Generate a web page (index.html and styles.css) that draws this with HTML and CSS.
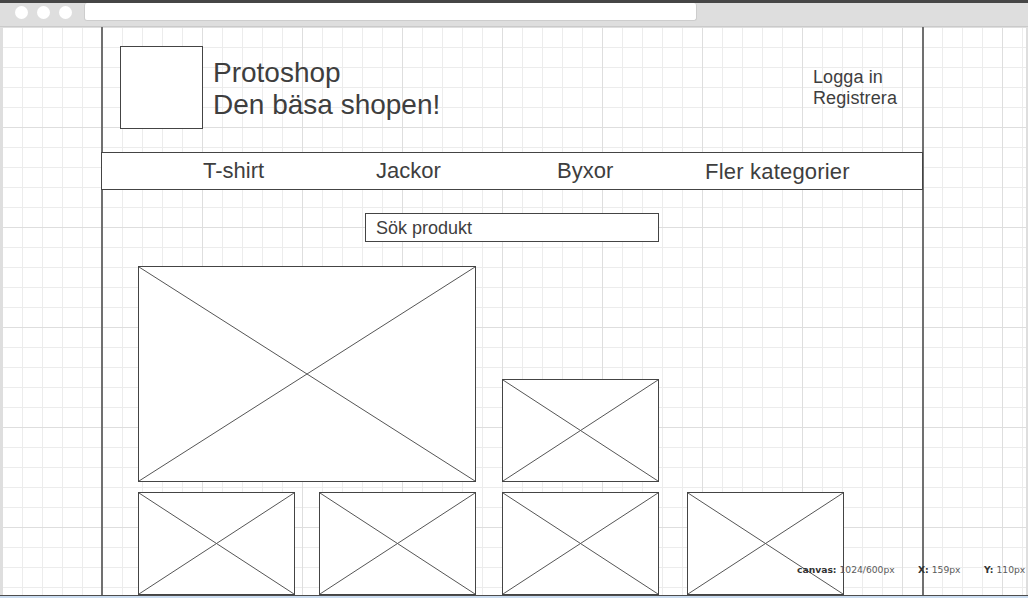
FILE: index.html
```html
<!DOCTYPE html>
<html lang="sv">
<head>
<meta charset="utf-8">
<title>Protoshop</title>
<link rel="stylesheet" href="styles.css">
</head>
<body>
<div class="window">
  <div class="chrome">
    <div class="dots">
      <span class="dot"></span>
      <span class="dot"></span>
      <span class="dot"></span>
    </div>
    <div class="address"></div>
  </div>
  <div class="canvas">
    <div class="page">
      <header class="header">
        <div class="logo"></div>
        <div class="brand">Protoshop<br>Den bäsa shopen!</div>
        <div class="account">Logga in<br>Registrera</div>
      </header>
      <nav class="nav">
        <span class="nav-item w1">T-shirt</span>
        <span class="nav-item w2">Jackor</span>
        <span class="nav-item w3">Byxor</span>
        <span class="nav-item">Fler kategorier</span>
      </nav>
      <div class="search">Sök produkt</div>
      <div class="row row-top">
        <div class="ph big"><svg viewBox="0 0 100 100" preserveAspectRatio="none"><line x1="0" y1="0" x2="100" y2="100"/><line x1="0" y1="100" x2="100" y2="0"/></svg></div>
        <div class="ph small gap26"><svg viewBox="0 0 100 100" preserveAspectRatio="none"><line x1="0" y1="0" x2="100" y2="100"/><line x1="0" y1="100" x2="100" y2="0"/></svg></div>
      </div>
      <div class="row row-bottom">
        <div class="ph small"><svg viewBox="0 0 100 100" preserveAspectRatio="none"><line x1="0" y1="0" x2="100" y2="100"/><line x1="0" y1="100" x2="100" y2="0"/></svg></div>
        <div class="ph small gap24"><svg viewBox="0 0 100 100" preserveAspectRatio="none"><line x1="0" y1="0" x2="100" y2="100"/><line x1="0" y1="100" x2="100" y2="0"/></svg></div>
        <div class="ph small gap26"><svg viewBox="0 0 100 100" preserveAspectRatio="none"><line x1="0" y1="0" x2="100" y2="100"/><line x1="0" y1="100" x2="100" y2="0"/></svg></div>
        <div class="ph small gap28"><svg viewBox="0 0 100 100" preserveAspectRatio="none"><line x1="0" y1="0" x2="100" y2="100"/><line x1="0" y1="100" x2="100" y2="0"/></svg></div>
      </div>
    </div>
    <div class="status">
      <span class="stat s1"><b>canvas:</b> 1024/600px</span>
      <span class="stat s2"><b>X:</b> 159px</span>
      <span class="stat"><b>Y:</b> 110px</span>
    </div>
  </div>
  <div class="bottom-line"></div>
  <div class="hscroll"></div>
</div>
</body>
</html>
```

FILE: styles.css
```css
html, body {
  margin: 0;
  padding: 0;
  width: 1028px;
  height: 598px;
  overflow: hidden;
  background: #dedede;
}

.window {
  display: flex;
  flex-direction: column;
  width: 1028px;
  height: 598px;
  font-family: "Liberation Sans", Arial, sans-serif;
  color: #3e3e3e;
}

.chrome {
  height: 23px;
  border-top: 3px solid #464646;
  border-bottom: 1px solid #cacaca;
  background: #dedede;
  display: flex;
  align-items: flex-start;
  flex: none;
}

.dots {
  display: flex;
  gap: 9px;
  margin-left: 15px;
  margin-top: 3px;
}

.dot {
  width: 13px;
  height: 13px;
  border-radius: 50%;
  background: #fff;
}

.address {
  margin-left: 12px;
  width: 613px;
  height: 18px;
  box-sizing: border-box;
  background: #fff;
  border: 1px solid #cdcdcd;
  border-top: none;
  border-radius: 3px;
}

.canvas {
  position: relative;
  flex: none;
  width: 1024px;
  height: 568px;
  margin-left: 2px;
  overflow: hidden;
  background-color: #fff;
  background-image:
    linear-gradient(to right, #dedede 1px, transparent 1px),
    linear-gradient(to bottom, #dedede 1px, transparent 1px),
    linear-gradient(to right, #ececec 1px, transparent 1px),
    linear-gradient(to bottom, #ececec 1px, transparent 1px);
  background-size: 100px 100px, 100px 100px, 20px 20px, 20px 20px;
}

.page {
  margin-left: 99px;
  width: 819px;
  height: 568px;
  border-left: 2px solid #707070;
  border-right: 2px solid #707070;
}

.header {
  display: flex;
  height: 83px;
  padding: 19px 0 23px 17px;
}

.logo {
  width: 83px;
  height: 83px;
  box-sizing: border-box;
  border: 1px solid #444;
  background: #fff;
  flex: none;
}

.brand {
  margin-left: 10px;
  align-self: center;
  font-size: 28px;
  line-height: 32px;
  margin-top: 2px;
}

.account {
  margin-left: auto;
  width: 109px;
  margin-top: 21px;
  align-self: flex-start;
  font-size: 18px;
  line-height: 21px;
  letter-spacing: 0.1px;
}

.nav {
  display: flex;
  width: 822px;
  height: 38px;
  margin-left: -2px;
  box-sizing: border-box;
  border: 1px solid #444;
  background: #fff;
  padding-left: 101px;
  font-size: 22px;
  line-height: 35px;
}

.nav-item {
  flex: none;
}

.w1 { width: 173px; }
.w2 { width: 181px; }
.w3 { width: 148px; }

.w3 + .nav-item {
  letter-spacing: 0.2px;
  padding-top: 1px;
}

.search {
  margin-top: 23px;
  margin-left: 262px;
  width: 294px;
  height: 29px;
  box-sizing: border-box;
  border: 1px solid #444;
  background: #fff;
  padding-left: 10px;
  font-size: 18px;
  line-height: 28px;
}

.row {
  display: flex;
  padding-left: 35px;
}

.row-top {
  margin-top: 24px;
  align-items: flex-end;
}

.row-bottom {
  margin-top: 10px;
}

.ph {
  box-sizing: border-box;
  border: 1px solid #444;
  background: #fff;
  flex: none;
}

.ph svg {
  display: block;
  width: 100%;
  height: 100%;
}

.ph line {
  stroke: #555;
  stroke-width: 1;
  vector-effect: non-scaling-stroke;
}

.big {
  width: 338px;
  height: 216px;
}

.small {
  width: 157px;
  height: 103px;
}

.gap24 { margin-left: 24px; }
.gap26 { margin-left: 26px; }
.gap28 { margin-left: 28px; }

.status {
  position: absolute;
  left: 795px;
  top: 537px;
  display: flex;
  white-space: nowrap;
  font-family: "DejaVu Sans", Verdana, sans-serif;
  font-size: 9.2px;
  line-height: 12px;
  color: #5a5a5a;
}

.status b {
  color: #333;
}

.stat {
  flex: none;
}

.s1 { width: 121px; }
.s2 { width: 66px; }

.bottom-line {
  flex: none;
  height: 1px;
  background: #4d4d4d;
}

.hscroll {
  flex: none;
  height: 2px;
  background: #cadcf0;
}
```
